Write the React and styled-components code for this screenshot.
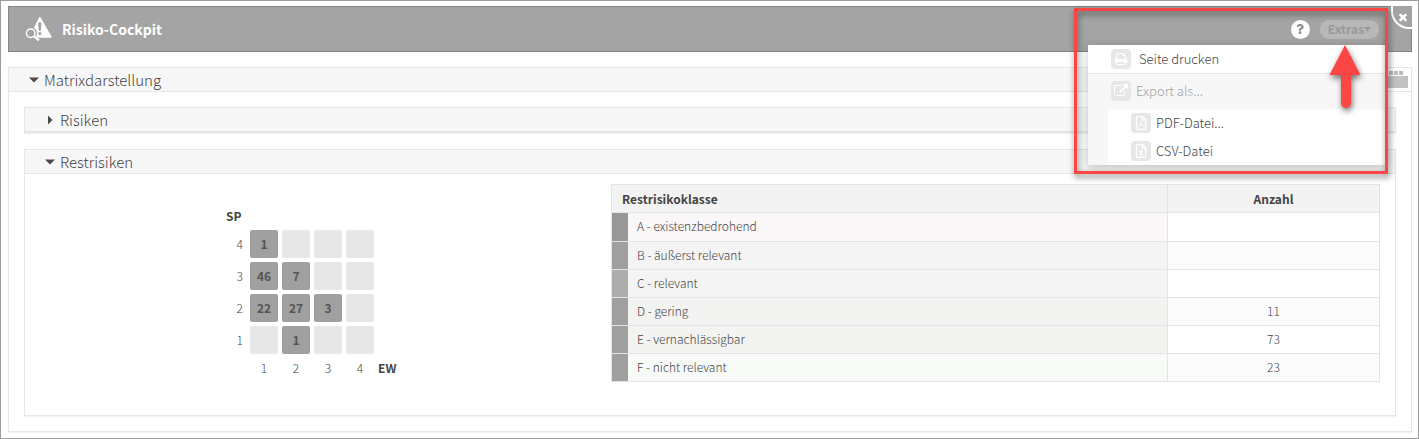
import React from "react";
import styled, { createGlobalStyle } from "styled-components";
import { FaRegFilePdf, FaRegFileExcel, FaQuestion } from "react-icons/fa";

const GlobalStyle = createGlobalStyle`
  *, *::before, *::after { box-sizing: border-box; }
  body { margin: 0; background: #fff; }
  body, button, table {
    font-family: "Noto Sans CJK SC", "Open Sans", sans-serif;
    font-size: 12px;
    line-height: 16px;
    font-weight: 300;
    color: #444;
  }
  button { margin: 0; border: 0; padding: 0; background: none; text-align: left; cursor: pointer; }
`;

const Frame = styled.div`
  position: relative;
  min-height: 100vh;
  padding: 5px 6px 6px 7px;
  border: 1px solid #9d9d9d;
`;

const Header = styled.header`
  position: relative;
  display: flex;
  align-items: center;
  height: 46px;
  padding: 0 32px 0 16px;
  border: 1px solid #858585;
  background: #a4a4a4;
`;

const Title = styled.h1`
  flex: 1;
  margin: 0 0 0 9px;
  font-size: 14px;
  line-height: 20px;
  font-weight: 700;
  color: #fff;
`;

const HelpButton = styled.button`
  display: flex;
  align-items: center;
  justify-content: center;
  width: 19px;
  height: 19px;
  margin-right: 10px;
  border-radius: 50%;
  background: #fff;
  color: #8c8c8c;
`;

const ExtrasButton = styled.button`
  display: flex;
  align-items: center;
  height: 19px;
  padding: 0 8px;
  border-radius: 10px;
  background: #b7b8b7;
  color: #999;
  font-weight: 700;
`;

const CloseButton = styled.button`
  position: absolute;
  top: -1px;
  right: -1px;
  display: flex;
  align-items: center;
  justify-content: center;
  width: 21px;
  height: 23px;
  border: solid #fff;
  border-width: 0 0 2px 2px;
  border-bottom-left-radius: 18px;
  background: #a4a4a4;
  color: #fff;
`;

const Menu = styled.div`
  position: absolute;
  top: 38px;
  right: 25px;
  z-index: 2;
  width: 298px;
  background: #f7f7f7;
  box-shadow: 0 3px 10px rgba(0, 0, 0, 0.22);
`;

const MenuItem = styled.button`
  display: flex;
  align-items: center;
  gap: ${(p) => (p.$wide ? "8px" : "5px")};
  width: 100%;
  height: 28px;
  padding-left: 23px;
  background: #fff;
  font-size: 13px;
`;

const MenuHeading = styled.div`
  display: flex;
  align-items: center;
  gap: 5px;
  height: 36px;
  padding: 0 0 2px 23px;
  border-top: 1px solid #e6e6e6;
  color: #a0a0a0;
  font-size: 13px;
`;

const SubMenu = styled.div`
  margin-left: 20px;
`;

const IconTile = styled.span`
  display: flex;
  align-items: center;
  justify-content: center;
  width: 20px;
  height: 20px;
  border-radius: 4px;
  background: #e7e7e7;
  color: #fff;
`;

const Panel = styled.section`
  margin-top: ${(p) => (p.$outer ? "15px" : "0")};
  border: 1px solid #e6e6e6;
  box-shadow: 0 1px 1px #f1f1f1;
`;

const PanelHead = styled.div`
  display: flex;
  height: 24px;
  border-bottom: 1px solid #e6e6e6;
  background: #f7f7f7;
`;

const PanelToggle = styled.button`
  flex: 1;
  display: flex;
  align-items: center;
  gap: 5px;
  padding-left: 20px;
  font-size: 15px;
`;

const PanelStack = styled.div`
  display: flex;
  flex-direction: column;
  gap: 16px;
  padding: 15px;
`;

const ViewButton = styled.button`
  display: flex;
  padding: 3px 2px 0 0;
  background: #fff;
`;

const Content = styled.div`
  display: flex;
  align-items: flex-start;
  min-height: 241px;
  padding: 10px 15px 32px 0;
`;

const MatrixPane = styled.div`
  flex: 1;
  display: flex;
  justify-content: center;
  padding: 18px 12px 0 0;
`;

const Matrix = styled.table`
  border-collapse: separate;
  border-spacing: 4px;
  table-layout: fixed;
  width: 180px;
`;

const AxisTitle = styled.th`
  width: 20px;
  height: 20px;
  padding: 0;
  text-align: left;
  white-space: nowrap;
`;

const AxisLabel = styled.th`
  width: ${(p) => (p.scope === "row" ? "20px" : "28px")};
  height: 20px;
  padding: 0 ${(p) => (p.scope === "row" ? "3px" : "0")} 0 0;
  text-align: ${(p) => (p.scope === "row" ? "right" : "center")};
  font-weight: 300;
`;

const MatrixCell = styled.td`
  width: 28px;
  height: 28px;
  padding: 0;
  border-radius: 2px;
  background: ${(p) => (p.$filled ? "#a0a0a0" : "#e7e7e7")};
  color: #555;
  text-align: center;
  font-weight: 700;
`;

const ClassTable = styled.table`
  width: 56.75%;
  border-collapse: collapse;
  table-layout: fixed;
`;

const HeadCell = styled.th`
  width: ${(p) => (p.$count ? "212px" : "auto")};
  height: 28px;
  padding: 0 10px;
  border: 1px solid #e4e4e4;
  background: #f3f3f3;
  text-align: ${(p) => (p.$count ? "center" : "left")};
`;

const NameCell = styled.td`
  height: 28px;
  padding: 0;
  border: 1px solid #e4e4e4;
  background: ${(p) => p.$tint};
`;

const NameBox = styled.div`
  display: flex;
  align-items: center;
  height: ${(p) => (p.$first ? "28px" : "27px")};
  padding: 0 0 2px 9px;
  border-left: 16px solid ${(p) => p.$bar};
`;

const CountCell = styled.td`
  padding: 0 0 2px;
  border: 1px solid #e4e4e4;
  background: ${(p) => (p.$even ? "#fcfcfc" : "#fff")};
  text-align: center;
`;

const Highlight = styled.div`
  position: absolute;
  top: 7px;
  right: 30px;
  z-index: 3;
  width: 314px;
  height: 166px;
  border: 3px solid #fc4545;
  filter: drop-shadow(1px 3px 3px rgba(0, 0, 0, 0.55));
  pointer-events: none;
`;

const Pointer = styled.svg`
  position: absolute;
  top: 34px;
  right: 22px;
`;

function Glyph({ d, size }) {
  return (
    <svg width={size} height={size} viewBox="0 0 1792 1792" fill="currentColor" aria-hidden="true">
      <path d={d} />
    </svg>
  );
}

const PRINT =
  "M448 1536h896v-256h-896v256zm0-640h896v-384h-160q-40 0-68-28t-28-68v-160h-640v640zm1152 64q0-26-19-45t-45-19-45 19-19 45 19 45 45 19 45-19 19-45zm128 0v416q0 13-9.5 22.5t-22.5 9.5h-224v160q0 40-28 68t-68 28h-960q-40 0-68-28t-28-68v-160h-224q-13 0-22.5-9.5t-9.5-22.5v-416q0-79 56.5-135.5t135.5-56.5h64v-544q0-40 28-68t68-28h672q40 0 88 20t76 48l152 152q28 28 48 76t20 88v256h64q79 0 135.5 56.5t56.5 135.5z";
const EXPORT =
  "M1408 928v320q0 119-84.5 203.5t-203.5 84.5h-832q-119 0-203.5-84.5t-84.5-203.5v-832q0-119 84.5-203.5t203.5-84.5h704q14 0 23 9t9 23v64q0 14-9 23t-23 9h-704q-66 0-113 47t-47 113v832q0 66 47 113t113 47h832q66 0 113-47t47-113v-320q0-14 9-23t23-9h64q14 0 23 9t9 23zm384-864v512q0 26-19 45t-45 19-45-19l-176-176-652 652q-10 10-23 10t-23-10l-114-114q-10-10-10-23t10-23l652-652-176-176q-19-19-19-45t19-45 45-19h512q26 0 45 19t19 45z";
const TIMES =
  "M1490 1322q0 40-28 68l-136 136q-28 28-68 28t-68-28l-294-294-294 294q-28 28-68 28t-68-28l-136-136q-28-28-28-68t28-68l294-294-294-294q-28-28-28-68t28-68l136-136q28-28 68-28t68 28l294 294 294-294q28-28 68-28t68 28l136 136q28 28 28 68t-28 68l-294 294 294 294q28 28 28 68z";

function RiskLogo() {
  return (
    <svg width="28" height="26" viewBox="0 0 28 26" aria-hidden="true">
      <path d="M14.800 1 Q15.300 1 15.700 1.800 L26.700 20.800 Q27 21.800 26 21.800 H4 L13.900 1.800 Q14.300 1 14.800 1Z" fill="#fff" />
      <circle cx="5.700" cy="17.300" r="6.300" fill="#a4a4a4" />
      <path d="M8 22 L13 22 L9.500 19z" fill="#a4a4a4" />
      <path d="M13.100 6.500 h3.400 l-.7 8.300 h-2z" fill="#a0a0a0" />
      <circle cx="14.800" cy="17.600" r="1.500" fill="#a0a0a0" />
      <circle cx="5.700" cy="17.300" r="4.300" fill="#a4a4a4" stroke="#fff" strokeWidth="1.500" />
      <path d="M9.200 20.400 L14 24.400" stroke="#fff" strokeWidth="2.200" />
    </svg>
  );
}

function Caret({ open }) {
  return (
    <svg width={10} height="10" viewBox="0 0 10 10" fill="#4a4a4a" aria-hidden="true">
      <path d={open ? "M0 2.500h10L5 7.500z" : "M3 0.500v9L7.500 5z"} />
    </svg>
  );
}

const AXIS = [1, 2, 3, 4];
const MATRIX = [
  { sp: 4, cells: [1, null, null, null] },
  { sp: 3, cells: [46, 7, null, null] },
  { sp: 2, cells: [22, 27, 3, null] },
  { sp: 1, cells: [null, 1, null, null] },
];

const CLASSES = [
  { name: "A - existenzbedrohend", count: "", bar: "#989898", tint: "#faf7f8" },
  { name: "B - äußerst relevant", count: "", bar: "#9f9f9f", tint: "#f4f4f4" },
  { name: "C - relevant", count: "", bar: "#aeadab", tint: "#f4f4f4" },
  { name: "D - gering", count: 11, bar: "#9f9f9f", tint: "#f3f3f1" },
  { name: "E - vernachlässigbar", count: 73, bar: "#9f9f9f", tint: "#f3f3f1" },
  { name: "F - nicht relevant", count: 23, bar: "#9f9f9f", tint: "#f8faf8" },
];

function RiskMatrix() {
  return (
    <Matrix>
      <thead>
        <tr>
          <AxisTitle>SP</AxisTitle>
          {AXIS.map((n) => (
            <AxisLabel as="td" key={n} />
          ))}
          <AxisTitle as="td" />
        </tr>
      </thead>
      <tbody>
        {MATRIX.map((row) => (
          <tr key={row.sp}>
            <AxisLabel scope="row">{row.sp}</AxisLabel>
            {row.cells.map((v, i) => (
              <MatrixCell key={i} $filled={v !== null}>{v}</MatrixCell>
            ))}
          </tr>
        ))}
      </tbody>
      <tfoot>
        <tr>
          <td />
          {AXIS.map((n) => (
            <AxisLabel key={n} scope="col">{n}</AxisLabel>
          ))}
          <AxisTitle>EW</AxisTitle>
        </tr>
      </tfoot>
    </Matrix>
  );
}

function ExtrasMenu() {
  return (
    <Menu>
      <MenuItem $wide>
        <IconTile><Glyph d={PRINT} size={14} /></IconTile>Seite drucken
      </MenuItem>
      <MenuHeading>
        <IconTile><Glyph d={EXPORT} size={14} /></IconTile>Export als...
      </MenuHeading>
      <SubMenu>
        <MenuItem><IconTile><FaRegFilePdf size={14} /></IconTile>PDF-Datei...</MenuItem>
        <MenuItem><IconTile><FaRegFileExcel size={14} /></IconTile>CSV-Datei</MenuItem>
      </SubMenu>
    </Menu>
  );
}

export default function App() {
  return (
    <>
      <GlobalStyle />
      <Frame>
        <Header>
          <RiskLogo />
          <Title>Risiko-Cockpit</Title>
          <HelpButton aria-label="Hilfe"><FaQuestion size={10} /></HelpButton>
          <ExtrasButton>
            Extras
            <svg width="7" height="5" viewBox="0 0 7 5" fill="currentColor" aria-hidden="true"><path d="M0 0h7L3.500 4.500z" /></svg>
          </ExtrasButton>
          <CloseButton aria-label="Schließen"><Glyph d={TIMES} size={12} /></CloseButton>
          <ExtrasMenu />
        </Header>

        <Panel $outer>
          <PanelHead>
            <PanelToggle aria-expanded="true"><Caret open />Matrixdarstellung</PanelToggle>
            <ViewButton aria-label="Ansicht">
              <svg width="22" height="18" viewBox="0 0 22 18" aria-hidden="true">
                <path d="M2 0h4v4H2zM7 0h4v4H7zM12 0h4v4h-4z" fill="#bcbcbc" />
                <path d="M0 5h21v12H0z" fill="#c2c2c2" />
              </svg>
            </ViewButton>
          </PanelHead>
          <PanelStack>
            <Panel>
              <PanelHead>
                <PanelToggle aria-expanded="false"><Caret />Risiken</PanelToggle>
              </PanelHead>
            </Panel>
            <Panel>
              <PanelHead>
                <PanelToggle aria-expanded="true"><Caret open />Restrisiken</PanelToggle>
              </PanelHead>
              <Content>
                <MatrixPane><RiskMatrix /></MatrixPane>
                <ClassTable>
                  <thead>
                    <tr>
                      <HeadCell>Restrisikoklasse</HeadCell>
                      <HeadCell $count>Anzahl</HeadCell>
                    </tr>
                  </thead>
                  <tbody>
                    {CLASSES.map((c, i) => (
                      <tr key={c.name}>
                        <NameCell $tint={c.tint}>
                          <NameBox $bar={c.bar} $first={i === 0}>{c.name}</NameBox>
                        </NameCell>
                        <CountCell $even={i % 2 === 1}>{c.count}</CountCell>
                      </tr>
                    ))}
                  </tbody>
                </ClassTable>
              </Content>
            </Panel>
          </PanelStack>
        </Panel>

        <Highlight>
          <Pointer width="34" height="66" viewBox="0 0 34 66" aria-hidden="true">
            <path d="M16 0 L31.500 30 H22 V58 a5 5 0 0 1 -10 0 V30 H0.500z" fill="#fc4545" />
          </Pointer>
        </Highlight>
      </Frame>
    </>
  );
}
